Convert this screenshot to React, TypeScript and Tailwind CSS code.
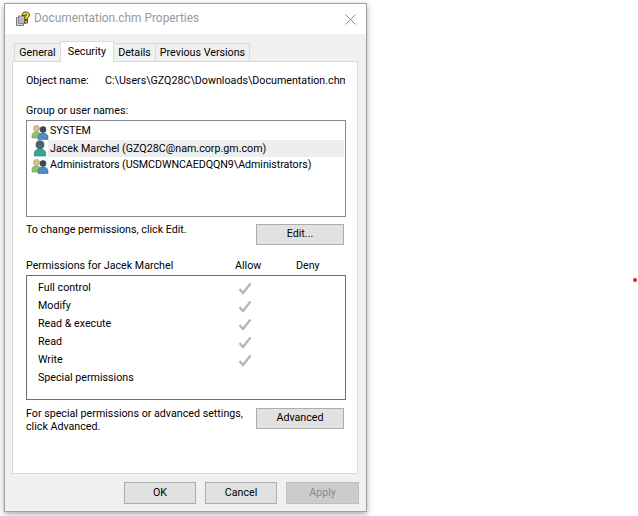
const font = { fontFamily: '"Roboto", "Liberation Sans", sans-serif' };

function FileIcon() {
  return (
    <svg width="16" height="16" viewBox="0 0 16 16" className="shrink-0">
      <path d="M1.5 6.5h7v8h-7z" fill="#d8d8d8" stroke="#777" />
      <path d="M3.5 5h7v7.5h-7z" fill="#b9b9b9" stroke="#8a8a8a" />
      <path
        d="M7 4.5C7 2.5 8.5 1 10.8 1s3.7 1.2 3.7 3c0 1.5-.9 2.2-2 2.9v1.6H9.7V6c0-.9 2-1.2 2-2.1 0-.8-1.6-.8-1.9.6z"
        fill="#f5dc2a"
        stroke="#3b3410"
        strokeWidth="0.9"
      />
      <rect x="9.7" y="9.4" width="2.8" height="2.6" fill="#f5dc2a" stroke="#3b3410" strokeWidth="0.8" />
    </svg>
  );
}

function GroupIcon() {
  return (
    <svg width="18" height="16" viewBox="0 0 18 16" className="shrink-0">
      <circle cx="5.5" cy="4.5" r="3" fill="#d8c08c" stroke="#a8945f" strokeWidth="0.6" />
      <path d="M1 14v-2.5C1 9 3 8 5.5 8S10 9 10 11.5V14z" fill="#8fbf68" stroke="#6d9a4a" strokeWidth="0.6" />
      <circle cx="12" cy="5.5" r="3" fill="#3a4a5c" stroke="#2a3644" strokeWidth="0.6" />
      <path d="M7 15.500V13C7 10.500 9.500 9 12 9s5 1.500 5 4v2.500z" fill="#4f8fc4" stroke="#34688f" strokeWidth="0.6" />
    </svg>
  );
}

function UserIcon() {
  return (
    <svg width="16" height="17" viewBox="0 0 16 18" className="shrink-0">
      <circle cx="8" cy="5" r="4.300" fill="#4a6275" stroke="#34485a" strokeWidth="0.6" />
      <path d="M2 17v-3.500C2 11 5 9.500 8 9.500s6 1.500 6 4V17z" fill="#35a597" stroke="#237a70" strokeWidth="0.6" />
    </svg>
  );
}

function Check() {
  return (
    <svg width="14" height="13" viewBox="0 0 14 13" className="shrink-0">
      <path d="M1.500 7 5 11 12.500 1.500" fill="none" stroke="#b4b4b4" strokeWidth="2.200" />
    </svg>
  );
}

function Tab({ label, active, className }: { label: string; active?: boolean; className: string }) {
  if (active) {
    return (
      <div className={`${className} -mb-px z-10 h-[21px] bg-white border border-b-0 border-[#d9d9d9] text-center leading-[19px] whitespace-nowrap`}>
        {label}
      </div>
    );
  }
  return (
    <div className={`${className} h-[18px] bg-[#f0f0f0] border border-b-0 border-[#d9d9d9] text-center leading-[18px] whitespace-nowrap`}>
      {label}
    </div>
  );
}

function Btn({ label, disabled, className }: { label: string; disabled?: boolean; className: string }) {
  return (
    <div
      className={`${className} flex items-center justify-center border ${
        disabled ? "bg-[#cccccc] border-[#bfbfbf] text-[#8a8a8a]" : "bg-[#e1e1e1] border-[#adadad] text-black"
      }`}
    >
      {label}
    </div>
  );
}

const perms = [
  { name: "Full control", allow: true },
  { name: "Modify", allow: true },
  { name: "Read & execute", allow: true },
  { name: "Read", allow: true },
  { name: "Write", allow: true },
  { name: "Special permissions", allow: false },
];

export default function App() {
  return (
    <div className="relative w-[638px] h-[516px] bg-white overflow-hidden text-[10.7px] text-black" style={font}>
      <div className="pl-[4px] pt-[3px]">
        <div className="w-[363px] h-[509px] flex flex-col bg-[#f0f0f0] border border-[#a0a0a0] shadow-[0_2px_6px_rgba(0,0,0,0.35)]">
          <div className="h-[30px] shrink-0 bg-white flex items-center pl-[10px] pr-[9px]">
            <FileIcon />
            <span className="ml-[3px] text-[11.9px] text-[#999999]">Documentation.chm Properties</span>
            <svg width="11" height="11" viewBox="0 0 11 11" className="ml-auto mr-[1px]">
              <path d="M.5.5l10 10M10.500.5l-10 10" stroke="#8c8c8c" strokeWidth="1" fill="none" />
            </svg>
          </div>

          <div className="flex items-end h-[27px] pl-[9px] shrink-0">
            <Tab label="General" className="w-[47px]" />
            <Tab label="Security" active className="w-[54px] -ml-px" />
            <Tab label="Details" className="w-[43px] -ml-px" />
            <Tab label="Previous Versions" className="w-[95px] -ml-px" />
          </div>

          <div className="ml-[7px] w-[346px] h-[413px] shrink-0 bg-white border border-[#d9d9d9] pl-[13px] pr-[11px]">
            <div className="flex h-[14px] mt-[12px] items-center whitespace-nowrap">
              <span className="w-[79px] shrink-0">Object name:</span>
              <span className="w-[240px] overflow-hidden">C:\Users\GZQ28C\Downloads\Documentation.chm</span>
            </div>

            <div className="mt-[16px] h-[14px] leading-[14px]">Group or user names:</div>
            <div className="mt-[2px] w-[320px] h-[97px] border border-[#828790] p-[1px] pt-[2px] whitespace-nowrap">
              <div className="flex items-center h-[17px] pl-[3px]">
                <GroupIcon />
                <span className="ml-[1px]">SYSTEM</span>
              </div>
              <div className="flex items-center h-[17px] pl-[3px]">
                <div className="w-[18px] flex justify-center shrink-0">
                  <UserIcon />
                </div>
                <span className="ml-[-1px] pl-[2px] flex-1 h-[17px] leading-[17px] bg-[#eeeeee]">
                  Jacek Marchel (GZQ28C@nam.corp.gm.com)
                </span>
              </div>
              <div className="flex items-center h-[17px] pl-[3px]">
                <GroupIcon />
                <span className="ml-[1px] tracking-[-0.06px]">Administrators (USMCDWNCAEDQQN9\Administrators)</span>
              </div>
            </div>

            <div className="flex mt-[6px]">
              <span className="w-[230px] h-[14px] leading-[14px]">To change permissions, click Edit.</span>
              <Btn label="Edit..." className="w-[88px] h-[21px] mt-[1px]" />
            </div>

            <div className="flex mt-[14px] h-[14px] leading-[14px]">
              <span className="w-[209px]">Permissions for Jacek Marchel</span>
              <span className="w-[61px]">Allow</span>
              <span>Deny</span>
            </div>
            <div className="mt-[2px] w-[320px] h-[125px] border border-[#6e6e6e] pl-[11px] pt-[3px]">
              {perms.map((p) => (
                <div key={p.name} className="flex items-center h-[18px]">
                  <span className="w-[200px]">{p.name}</span>
                  {p.allow && <Check />}
                </div>
              ))}
            </div>

            <div className="flex mt-[7px]">
              <div className="w-[230px] leading-[13px] whitespace-nowrap">
                For special permissions or advanced settings,
                <br />
                click Advanced.
              </div>
              <Btn label="Advanced" className="w-[88px] h-[21px] mt-[1px]" />
            </div>
          </div>

          <div className="flex justify-end gap-[9px] mt-[8px] pr-[7px]">
            <Btn label="OK" className="w-[72px] h-[22px]" />
            <Btn label="Cancel" className="w-[72px] h-[22px]" />
            <Btn label="Apply" disabled className="w-[73px] h-[22px]" />
          </div>
        </div>
      </div>
      <div className="absolute left-[633px] top-[278px] w-[4px] h-[4px] rounded-full bg-[#e0202a]" />
    </div>
  );
}
